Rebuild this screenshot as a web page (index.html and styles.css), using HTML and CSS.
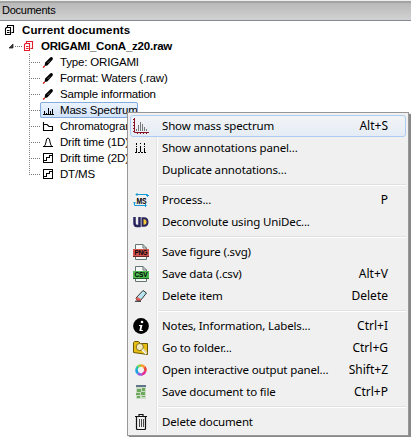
FILE: index.html
```html
<!DOCTYPE html>
<html lang="en">
<head>
<meta charset="utf-8">
<title>Documents</title>
<link rel="stylesheet" href="styles.css">
</head>
<body>
<svg class="defs" aria-hidden="true">
  <symbol id="docs" viewBox="0 0 16 16"><path d="M4.500 6.500l1-1h4v7h-5zM6.500 5V3.500h6v7h-2M6 8.500h2.500M6 10.500h2.500" fill="none" stroke="currentColor" stroke-width="1.100"/></symbol>
  <symbol id="pencil" viewBox="0 0 16 16"><path d="M4.500 12l.7-3.500 4.500-4.500q1.500-1.500 2.800-.5 1 1-.2 2.500l-5 5.500z" fill="#000"/><path d="M7.500 9l2.500-2.500" stroke="#aaa" stroke-width=".6"/><path d="M3 13.500l1.700-1.500" stroke="#d00" stroke-width="1.200"/></symbol>
  <symbol id="step" viewBox="0 0 16 16"><path d="M3.500 3.500h9v9h-9zM4 10.500h2.500v-3h3v-2H12" fill="none" stroke="#000" shape-rendering="crispEdges"/></symbol>
</svg>
<header class="title">Documents</header>
<main class="tree">
  <div class="node root"><svg class="icon"><use href="#docs"/></svg><span>Current documents</span></div>
  <div class="node file"><svg class="arrow" viewBox="0 0 6 6"><path d="M1 5h4V1z" fill="#444" stroke="#111" stroke-width=".7"/></svg><i></i><svg class="icon red"><use href="#docs"/></svg><span>ORIGAMI_ConA_z20.raw</span></div>
  <div class="branch">
    <div class="node"><svg class="icon"><use href="#pencil"/></svg><span>Type: ORIGAMI</span></div>
    <div class="node"><svg class="icon"><use href="#pencil"/></svg><span>Format: Waters (.raw)</span></div>
    <div class="node"><svg class="icon"><use href="#pencil"/></svg><span>Sample information</span></div>
    <div class="node selected"><svg class="icon" viewBox="0 0 16 16"><path d="M3 12.500h11M4.500 12V9M6.500 12v-1M8.500 12V6M10.500 12V9M12.500 12V7" stroke="#000" fill="none"/></svg><span>Mass Spectrum</span></div>
    <div class="node"><svg class="icon" viewBox="0 0 16 16"><path d="M3.500 4v8.500h9v-4H9l-2-2H3.500" stroke="#000" fill="none" stroke-width="1.100"/></svg><span>Chromatogram</span></div>
    <div class="node"><svg class="icon" viewBox="0 0 16 16"><path d="M3 12.500h10M4 12.500q1.500-1 2-4.500.3-4 2-4t2 4q.5 3.500 2 4.500" stroke="#000" fill="none"/></svg><span>Drift time (1D)</span></div>
    <div class="node"><svg class="icon"><use href="#step"/></svg><span>Drift time (2D)</span></div>
    <div class="node"><svg class="icon"><use href="#step"/></svg><span>DT/MS</span></div>
  </div>
</main>
<nav class="menu">
  <div class="item active"><svg viewBox="0 0 16 16"><path d="M1.500 0v14.500H16M0 1.500h1M0 4.500h1M0 7.500h1M0 10.500h1M0 13.500h1M4.500 15v1M7.500 15v1M10.500 15v1M13.500 15v1" stroke="#8b1024" fill="none"/><path d="M3.500 13v-2M5.500 13V7M7.500 13V4M9.500 13V6M11.500 13V9M13.500 13v-2" stroke="#777"/></svg><span>Show mass spectrum</span><kbd>Alt+S</kbd></div>
  <div class="item"><svg viewBox="0 0 16 16"><path d="M2 12.500h2M5 12.500h2M8 12.500h2M11 12.500h2M3.500 12V8M7.500 12V6M11.500 12V8M3.500 5V3M7.500 4V3M11.500 5V3M3.500 7V6M11.500 7V6" stroke="#000"/></svg><span>Show annotations panel...</span></div>
  <div class="item"><svg></svg><span>Duplicate annotations...</span></div>
  <hr>
  <div class="item"><svg viewBox="0 0 16 16"><path d="M3 2.500h11.500v2M13 3l1.500 1.500L16 3M1.500 10v3.500H13M0 11.500l1.500-1.500L3 11.500M12 12l1.500 1.500L12 15M4.500 1L3 2.500 4.500 4" stroke="#159bd7" fill="none"/><text class="ms" x="3.500" y="11.500" textLength="10" lengthAdjust="spacingAndGlyphs">MS</text></svg><span>Process...</span><kbd>P</kbd></div>
  <div class="item"><svg viewBox="0 0 16 16"><path d="M1.500 3v6q0 3 2.500 3h2.500V3" fill="none" stroke="#28255c" stroke-width="2.500"/><path d="M9.500 4.200H11q3.500 0 3.500 3.800T11 11.800H9.500z" fill="#f6c83b" stroke="#28255c" stroke-width="2"/></svg><span>Deconvolute using UniDec...</span></div>
  <hr>
  <div class="item"><svg viewBox="0 0 16 16"><path d="M2.500 15.500v-15H10L13.500 4v11.500zM10 .5V4h3.500" fill="#f8f8f8" stroke="#657574"/><path d="M0 5h16v7H0z" fill="#d35550"/><path d="M0 12.500h16" stroke="#662b29"/><text class="type" x="1.500" y="11" textLength="13" lengthAdjust="spacingAndGlyphs">PNG</text></svg><span>Save figure (.svg)</span></div>
  <div class="item"><svg viewBox="0 0 16 16"><path d="M2.500 15.500v-15H10L13.500 4v11.500zM10 .5V4h3.500" fill="#f8f8f8" stroke="#657574"/><path d="M0 5h16v7H0z" fill="#4dbb51"/><path d="M0 12.500h16" stroke="#226426"/><text class="type" x="1.500" y="11" textLength="13" lengthAdjust="spacingAndGlyphs">CSV</text></svg><span>Save data (.csv)</span><kbd>Alt+V</kbd></div>
  <div class="item"><svg viewBox="0 0 16 16"><path d="M3 10l7-7.500 3.500 2.500-6 7.500H4z" fill="#b8e5ef" stroke="#222" stroke-width=".9"/><path d="M3 10.500l1.500-1.500 4 2.500-1.500 1.300H4z" fill="#e65d5d"/><path d="M2 13.300h6" stroke="#222"/></svg><span>Delete item</span><kbd>Delete</kbd></div>
  <hr>
  <div class="item"><svg viewBox="0 0 16 16"><circle cx="8" cy="8" r="7.900"/><circle cx="9" cy="4" r="1.300" fill="#fff"/><path d="M6 7h3.500L8.300 12H10l-.3 1H6.300L7.300 8H6z" fill="#fff"/></svg><span>Notes, Information, Labels...</span><kbd>Ctrl+I</kbd></div>
  <div class="item"><svg viewBox="0 0 16 16"><path d="M.5 2.500l1-1h4l2 2h7v11L.5 12.500z" fill="#e6bd12" stroke="#6d5800"/><circle cx="6.800" cy="7" r="3.600" fill="#f0e9b8" stroke="#857024"/><path d="M9.500 9.500l4 4" stroke="#fff" stroke-width="2.500"/><path d="M10 9.500l3.500 3.500" stroke="#a28d3c" stroke-width=".7"/></svg><span>Go to folder...</span><kbd>Ctrl+G</kbd></div>
  <div class="item"><svg viewBox="0 0 16 16"><g fill="none" stroke-width="2.600"><path d="M8 3.500a4.500 4.500 0 0 1 3.500 1.600" stroke="#ff9d2c"/><path d="M11.500 5.100A4.500 4.500 0 0 1 12.300 9.200" stroke="#ed4538"/><path d="M12.300 9.200A4.500 4.500 0 0 1 9 12.400" stroke="#e22c96"/><path d="M9 12.400A4.500 4.500 0 0 1 4.900 11.300" stroke="#9657dd"/><path d="M4.900 11.300A4.500 4.500 0 0 1 3.600 7" stroke="#18a0e4"/><path d="M3.600 7A4.500 4.500 0 0 1 5.200 4.500" stroke="#27c4a4"/><path d="M5.200 4.500A4.500 4.500 0 0 1 8 3.500" stroke="#99cf36"/></g></svg><span>Open interactive output panel...</span><kbd>Shift+Z</kbd></div>
  <div class="item"><svg viewBox="0 0 16 16"><path d="M3 1h10v14H3z" fill="#cbdcc7"/><path d="M3 1h10v2H3z" fill="#60758a"/><path d="M4 5h4v3H4zM9 4h3v3H9zM3 9h4v2H3zM8 8h4v3H8zM4 12h3v2H4zM9 12h3v1H9z" fill="#6da85d"/></svg><span>Save document to file</span><kbd>Ctrl+P</kbd></div>
  <hr>
  <div class="item"><svg viewBox="0 0 16 16"><path d="M2 2.500h12M6 2V.5h4V2M3.500 3v11.500q0 1 1 1h7q1 0 1-1V3" stroke="#111" stroke-width="1.200" fill="none"/><path d="M6.500 5v8M8.500 5v8M10.500 5v8" stroke="#333" stroke-width=".9"/></svg><span>Delete document</span></div>
</nav>
</body>
</html>
```
FILE: styles.css
```css
* { box-sizing: border-box; }
body { margin: 0; width: 411px; height: 437px; overflow: hidden; background: #fff; color: #000; font: 11.5px/16px "Liberation Sans", Arial, sans-serif; position: relative; }
.defs { display: none; }
.title { height: 21px; padding: 0 2px; line-height: 19px; font-size: 11px; letter-spacing: -.25px; border-top: 1px solid #eee; border-bottom: 1px solid #858997; background: linear-gradient(#a3a3a1 0 2px, #b9b9b9 2px, #d2d2d2); }
.tree { padding-top: 1px; letter-spacing: -.18px; }
.node { display: flex; height: 16px; align-items: center; white-space: nowrap; }
.icon { width: 16px; height: 16px; flex: none; }
.root { padding-left: 1px; gap: 5px; font-weight: bold; letter-spacing: .13px; }
.file { padding-left: 8px; font-weight: bold; letter-spacing: -.22px; }
.file i { width: 7px; border-top: 1px dotted #777; margin-left: 1px; }
.arrow { width: 6px; height: 6px; }
.red { color: #e41b2a; margin: 0 5px 0 -2px; }
.branch { margin-left: 29px; background: repeating-linear-gradient(#888 0 1px, transparent 1px 2px) 0 0 / 1px 120px no-repeat; }
.branch .node { gap: 3px; }
.branch .node::before { content: ""; flex: none; width: 11px; border-top: 1px dotted #777; margin-right: -3px; }
.branch span { padding: 0 1px; }
.selected { width: 109px; background: linear-gradient(#edf4fe, #cfe2fc) 11px 0 / 98px 16px no-repeat; position: relative; }
.selected::after { content: ""; position: absolute; inset: 0 0 0 11px; border: 1px solid #84acdd; border-radius: 2px; }
.menu { position: absolute; left: 127px; top: 112px; width: 282px; height: 324px; padding: 2px; border: 1px solid #979797; background: linear-gradient(90deg, #e2e3e3 0 1px, #fff 1px 2px, transparent 2px) 28px 2px / 2px 318px no-repeat, #f0f0f0; box-shadow: 2px 2px 1px #888; font: 11.5px/22px "Noto Sans", "Open Sans", sans-serif; letter-spacing: -.15px; }
.item { height: 22px; display: flex; align-items: center; padding: 0 18px 0 3px; border: 0 solid #aeccf1; white-space: nowrap; }
.item svg { width: 16px; height: 16px; flex: none; margin-right: 13px; }
.item span { flex: 1; }
.item kbd { font: inherit; font-size: 12px; letter-spacing: 0; }
.active { border-width: 1px; padding: 0 17px 0 2px; border-radius: 3px; background: linear-gradient(#f2f4f7, #e5ecf5); }
.menu hr { height: 8px; margin: 0 0 0 28px; border: 0; background: linear-gradient(transparent 3px, #e0e0e0 3px 4px, #fff 4px 5px, transparent 5px); }
.ms { font: bold 9px "Liberation Sans", sans-serif; }
.type { font: bold 6.5px "Liberation Sans", sans-serif; }
```
